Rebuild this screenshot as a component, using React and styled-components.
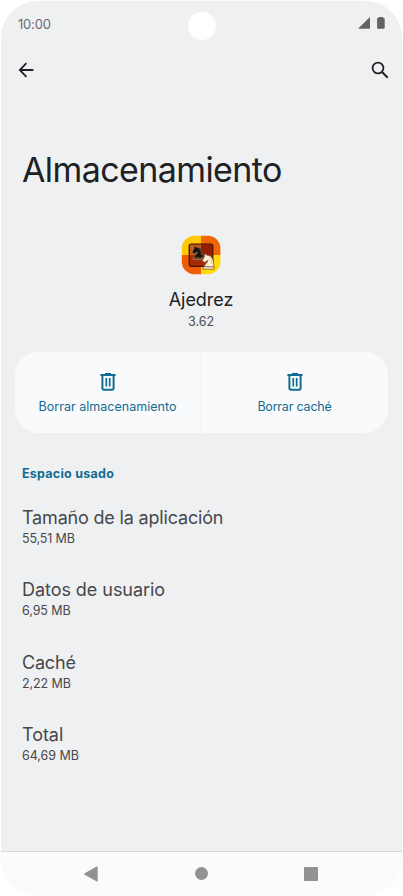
import React from 'react'
import styled, { createGlobalStyle } from 'styled-components'

const usage = [
    { name: 'Tamaño de la aplicación', size: '55,51 MB', spacing: '-0.18px', sizeSpacing: '-0.15px' },
    { name: 'Datos de usuario', size: '6,95 MB', spacing: '-0.05px', sizeSpacing: '-0.1px' },
    { name: 'Caché', size: '2,22 MB', spacing: '-0.2px', sizeSpacing: '-0.1px' },
    { name: 'Total', size: '64,69 MB', spacing: '-0.05px', sizeSpacing: '-0.05px' },
]

const TrashIcon = () => (
    <svg width='18' height='20' viewBox='0 0 18 20' fill='none' stroke='#126c91' strokeWidth='2'>
        <path d='M1.4 3.1h15.2M6 1.9h6' />
        <path d='M3.4 3v13.6q0 1.1 1.1 1.1h9q1.1 0 1.1-1.1V3' />
        <path d='M7.3 6v8.4M10.7 6v8.4' strokeWidth='1.7' />
    </svg>
)

const ChessIcon = () => (
    <svg width='40' height='40' viewBox='0 0 40 40'>
        <defs>
            <clipPath id='tile'>
                <rect x='.8' y='.8' width='38.6' height='38.4' rx='12.5' />
            </clipPath>
        </defs>
        <g clipPath='url(#tile)'>
            <path d='M0 0h20v20H0z' fill='#ffc908' />
            <path d='M20 0h20v20H20z' fill='#f06508' />
            <path d='M0 20h20v20H0z' fill='#ee5c05' />
            <path d='M20 20h20v20H20z' fill='#ffdc08' />
        </g>
        <rect x='8.2' y='9' width='23.6' height='22.4' rx='2' fill='#a52b08' stroke='#3c1307' strokeWidth='1.2' />
        <path d='M9 9.7h11v10.5H9z' fill='#bd5a20' />
        <path d='M20 9.7h11v10.5H20z' fill='#941d06' />
        <path
            d='M13 23c0-3 3.4-3.8 3.8-6l-3.6 1.8-2.2-1.7 2.2-3.7.1-2.6 2.5 1.5c4.3.1 6.4 3.4 6.1 10.7z'
            fill='#17120e' stroke='#c88a5c' strokeWidth='.4'
        />
        <path d='M17.3 13.4c2.5 1.3 3.3 3.6 2.8 6.6' fill='none' stroke='#b08868' strokeWidth='.5' />
        <path d='M11.8 23.2h10.4v1.3H11.8z' fill='#17120e' stroke='#e0a472' strokeWidth='.5' />
        <path
            d='M23.2 32c0-3 3.6-4.4 3.9-6.6l-3.6 2-2.2-1.6 2.3-4.4.1-2.8 2.6 1.7c4.6.2 6.7 4.2 6.4 11.7z'
            fill='#fff1d1' stroke='#59321b' strokeWidth='.5'
        />
        <path d='M21.8 31.8h11.4v2.4H21.8z' fill='#ffe9bd' stroke='#59321b' strokeWidth='.6' />
        <path d='M28 22.8c2.4 1.1 3.3 3.3 2.9 6.4' fill='none' stroke='#b68c5d' strokeWidth='.5' />
    </svg>
)

const App = () => {
    return (
        <>
            <GlobalStyle />
            <StPhone>
                <StStatusBar>
                    <StClock>10:00</StClock>
                    <StCamera />
                    <StSignals>
                        <svg width='28' height='14' viewBox='0 0 28 14' fill='#626365'>
                            <path d='M0 12.8 12 1v11.8z' />
                            <path d='M20.8 1.8V1h4v.8h.7q1.2 0 1.2 1.2v8.8q0 1-1 1h-5.6q-1 0-1-1V3q0-1.2 1.2-1.2z' />
                        </svg>
                    </StSignals>
                </StStatusBar>
                <StToolbar>
                    <svg width='16' height='16' viewBox='0 0 16 16' fill='none' stroke='#202124' strokeWidth='1.8'>
                        <path d='M15.4 8H2M8.4 1.2 1.8 8l6.6 6.8' />
                    </svg>
                    <svg width='18' height='18' viewBox='0 0 18 18' fill='none' stroke='#202124' strokeWidth='1.8'>
                        <circle cx='7' cy='7' r='5.4' />
                        <path d='m10.8 10.8 5.9 5.9' strokeWidth='2' />
                    </svg>
                </StToolbar>
                <StTitle>Almacenamiento</StTitle>
                <StAppInfo>
                    <ChessIcon />
                    <StAppName>Ajedrez</StAppName>
                    <StVersion>3.62</StVersion>
                </StAppInfo>
                <StActions>
                    <StAction>
                        <TrashIcon />
                        <StActionLabel $spacing='0.02px'>Borrar almacenamiento</StActionLabel>
                    </StAction>
                    <StAction>
                        <TrashIcon />
                        <StActionLabel $spacing='-0.2px'>Borrar caché</StActionLabel>
                    </StAction>
                </StActions>
                <StSection>
                    <StHeading>Espacio usado</StHeading>
                    {usage.map((item) => (
                        <StRow key={item.name}>
                            <StRowName $spacing={item.spacing}>{item.name}</StRowName>
                            <StRowSize $spacing={item.sizeSpacing}>{item.size}</StRowSize>
                        </StRow>
                    ))}
                </StSection>
                <StNavBar>
                    <svg width='14' height='16' viewBox='0 0 14 16' fill='#929292'>
                        <path d='M.7 7.2 12.7.4q1-.5 1 .6v14q0 1.1-1 .6L.7 8.8q-1-.8 0-1.6z' />
                    </svg>
                    <StHome />
                    <StRecents />
                </StNavBar>
            </StPhone>
        </>
    )
}

export default App

const GlobalStyle = createGlobalStyle`
    * {
        box-sizing: border-box;
    }
    body {
        margin: 0;
        background: #fff;
        font-family: Inter, 'Open Sans', sans-serif;
    }
    svg {
        display: block;
        flex-shrink: 0;
    }
`

const StPhone = styled.div`
    width: 403px;
    height: 896px;
    display: flex;
    flex-direction: column;
    border: 1px solid #fdfdfd;
    border-bottom: 0;
    border-radius: 38px;
    background: #eff0f2;
    overflow: hidden;
`

const StStatusBar = styled.div`
    height: 48px;
    display: grid;
    grid-template-columns: 1fr 28px 1fr;
    align-items: center;
    padding: 0 16px 0 17px;
`

const StClock = styled.span`
    font-size: 13px;
    line-height: 20px;
    letter-spacing: -0.2px;
    color: #6b6c6e;
    margin-top: -3px;
`

const StCamera = styled.div`
    width: 28px;
    height: 28px;
    margin-top: 2px;
    border-radius: 50%;
    background: #fff;
`

const StSignals = styled.div`
    display: flex;
    justify-content: flex-end;
    margin-top: -4px;
`

const StToolbar = styled.div`
    height: 42px;
    display: flex;
    justify-content: space-between;
    align-items: center;
    padding: 0 13px 0 17px;
`

const StTitle = styled.h1`
    margin: 59px 0 0 21px;
    font-size: 34px;
    font-weight: 400;
    line-height: 40px;
    letter-spacing: -0.6px;
    color: #202124;
`

const StAppInfo = styled.div`
    display: flex;
    flex-direction: column;
    align-items: center;
    margin-top: 45px;
    padding-right: 1px;
`

const StAppName = styled.div`
    margin-top: 13px;
    font-size: 18px;
    line-height: 24px;
    letter-spacing: -0.05px;
    color: #202124;
`

const StVersion = styled.div`
    font-size: 12.5px;
    line-height: 20px;
    color: #4b4d50;
`

const StActions = styled.div`
    height: 81px;
    display: grid;
    grid-template-columns: 185px 1fr;
    gap: 1px;
    margin: 20px 14px 0;
    border-radius: 24px;
    background: #f3f4f6;
    overflow: hidden;
`

const StAction = styled.div`
    display: flex;
    flex-direction: column;
    align-items: center;
    padding-top: 20px;
    background: #f9fafc;
`

const StActionLabel = styled.span`
    margin-top: 5px;
    font-size: 12.5px;
    line-height: 20px;
    letter-spacing: ${({ $spacing }) => $spacing};
    color: #126c91;
    white-space: nowrap;
`

const StSection = styled.div`
    flex: 1;
    padding: 31px 21px 0;
`

const StHeading = styled.h2`
    margin: 0 0 19px;
    font-size: 12.5px;
    font-weight: 700;
    line-height: 20px;
    letter-spacing: 0.25px;
    color: #126c91;
`

const StRow = styled.div`
    height: 72.3px;
    padding-top: 3px;
`

const StRowName = styled.div`
    font-size: 18px;
    line-height: 24px;
    letter-spacing: ${({ $spacing }) => $spacing};
    color: #46484b;
`

const StRowSize = styled.div`
    font-size: 12.5px;
    line-height: 18px;
    letter-spacing: ${({ $spacing }) => $spacing};
    color: #46484b;
`

const StNavBar = styled.div`
    height: 45px;
    display: flex;
    justify-content: space-between;
    align-items: center;
    padding: 0 84px 1px 83px;
    border-top: 1px solid #d7d8da;
    background: #fbfbfb;
`

const StHome = styled.div`
    width: 13px;
    height: 13px;
    border-radius: 50%;
    background: #929292;
`

const StRecents = styled.div`
    width: 14px;
    height: 14px;
    border-radius: 1px;
    background: #929292;
`
